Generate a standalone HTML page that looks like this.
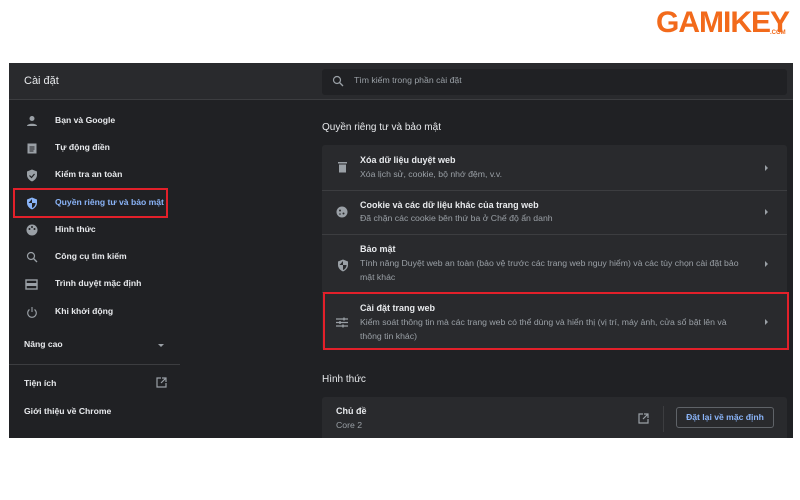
<!DOCTYPE html>
<html><head><meta charset="utf-8"><style>
*{margin:0;padding:0;box-sizing:border-box}
body{width:800px;height:500px;background:#fff;font-family:"Liberation Sans",sans-serif;position:relative;overflow:hidden}
.app{position:absolute;left:9px;top:63px;width:784px;height:375px;background:#202124;overflow:hidden}
.hdr{position:absolute;left:0;top:0;width:784px;height:37px;background:#292a2d;border-bottom:1px solid #3c3d40}
.t{position:absolute;color:#e8eaed;font-size:9.5px;white-space:nowrap}
.b{font-weight:bold}
.sb{font-size:8.6px}
.s{color:#9aa0a6;font-size:8.7px}
.ic{position:absolute}
.card{position:absolute;left:313px;width:465px;background:#292a2d;border-radius:3px}
.sep{position:absolute;left:313px;width:465px;height:1px;background:#3c3d40}
.red{position:absolute;border:2.5px solid #e2202a}
.arr{position:absolute;left:756px;width:0;height:0;border-top:3px solid transparent;border-bottom:3px solid transparent;border-left:3px solid #9aa0a6}
</style></head><body>
<div style="position:absolute;left:656px;top:6px;font:bold 30px 'Liberation Sans',sans-serif;color:#f26a1b;letter-spacing:-1px">GAMIKEY</div>
<div style="position:absolute;left:770px;top:30px;font:bold 6px 'Liberation Sans',sans-serif;color:#f26a1b">.COM</div>
<div class="app">
<div class="hdr"></div>
<div class="t" style="left:15px;top:12px;font-size:11px">Cài đặt</div>
<div style="position:absolute;left:313px;top:6px;width:465px;height:26px;background:#202124;border-radius:3px"></div>
<svg class="ic" style="left:323px;top:12px" width="12" height="12" viewBox="0 0 12 12"><circle cx="5" cy="5" r="3.5" fill="none" stroke="#9aa0a6" stroke-width="1.2"/><path d="M7.5 7.5L11 11" stroke="#9aa0a6" stroke-width="1.3"/></svg>
<div class="t s" style="left:345px;top:12px">Tìm kiếm trong phần cài đặt</div>

<!-- sidebar -->
<svg class="ic" style="left:17px;top:52px" width="12" height="12"><circle cx="6" cy="3.5" r="2.5" fill="#9aa0a6"/><path d="M1 11c0-3 10-3 10 0z" fill="#9aa0a6"/></svg>
<div class="t b sb" style="left:46px;top:52px">Bạn và Google</div>
<svg class="ic" style="left:18px;top:79px" width="10" height="12"><rect x="0.5" y="1.5" width="9" height="10" fill="#9aa0a6"/><path d="M2.5 5h5M2.5 7h5M2.5 9h4" stroke="#202124"/></svg>
<div class="t b sb" style="left:46px;top:79px">Tự động điền</div>
<svg class="ic" style="left:17px;top:106px" width="12" height="13"><path d="M6 0.5L11 2.5V6c0 3-2.5 5.5-5 6.5C3.5 11.5 1 9 1 6V2.5z" fill="#9aa0a6"/><path d="M3.5 6.5l2 2 3-3.5" stroke="#202124" fill="none" stroke-width="1.2"/></svg>
<div class="t b sb" style="left:46px;top:106px">Kiểm tra an toàn</div>
<svg class="ic" style="left:17px;top:134px" width="12" height="13"><path d="M6 0.5L11 2.5V6c0 3-2.5 5.5-5 6.5C3.5 11.5 1 9 1 6V2.5z" fill="#8ab4f8"/><path d="M6 2v4H2.5M6 6h3.5V7c-.5 2-2 3.5-3.5 4z" fill="#202124"/></svg>
<div class="t b sb" style="left:46px;top:134px;color:#8ab4f8">Quyền riêng tư và bảo mật</div>
<div class="red" style="left:4px;top:125px;width:155px;height:30px"></div>
<svg class="ic" style="left:17px;top:161px" width="12" height="12"><circle cx="6" cy="6" r="5.5" fill="#9aa0a6"/><circle cx="3.5" cy="5" r="1" fill="#202124"/><circle cx="6" cy="3" r="1" fill="#202124"/><circle cx="8.5" cy="5" r="1" fill="#202124"/></svg>
<div class="t b sb" style="left:46px;top:161px">Hình thức</div>
<svg class="ic" style="left:17px;top:188px" width="12" height="12"><circle cx="5" cy="5" r="3.5" fill="none" stroke="#9aa0a6" stroke-width="1.2"/><path d="M7.5 7.5L11 11" stroke="#9aa0a6" stroke-width="1.3"/></svg>
<div class="t b sb" style="left:46px;top:188px">Công cụ tìm kiếm</div>
<svg class="ic" style="left:16px;top:216px" width="13" height="11"><rect x="1" y="1" width="11" height="9" fill="none" stroke="#9aa0a6" stroke-width="1.4"/><rect x="1" y="4" width="11" height="3" fill="#9aa0a6"/></svg>
<div class="t b sb" style="left:46px;top:215px">Trình duyệt mặc định</div>
<svg class="ic" style="left:17px;top:243px" width="12" height="12"><path d="M3.5 3.5a4.3 4.3 0 1 0 5 0" fill="none" stroke="#9aa0a6" stroke-width="1.1"/><path d="M6 1v5" stroke="#9aa0a6" stroke-width="1.1"/></svg>
<div class="t b sb" style="left:46px;top:243px">Khi khởi động</div>
<div class="t b sb" style="left:15px;top:276px">Nâng cao</div>
<div style="position:absolute;left:149px;top:281px;border-left:3px solid transparent;border-right:3px solid transparent;border-top:3px solid #9aa0a6"></div>
<div style="position:absolute;left:0;top:301px;width:171px;height:1px;background:#3c3d40"></div>
<div class="t b sb" style="left:15px;top:315px">Tiện ích</div>
<svg class="ic" style="left:147px;top:314px" width="11" height="11"><path d="M5 1H1v9h9V6" fill="none" stroke="#9aa0a6" stroke-width="1.2"/><path d="M6 1h4v4M10 1L5 6" fill="none" stroke="#9aa0a6" stroke-width="1.2"/></svg>
<div class="t b sb" style="left:15px;top:343px">Giới thiệu về Chrome</div>

<!-- main -->
<div class="t" style="left:313px;top:59px;font-size:10px">Quyền riêng tư và bảo mật</div>
<div class="card" style="top:82px;height:205px"></div>
<div class="sep" style="top:127px"></div>
<div class="sep" style="top:171px"></div>
<div class="sep" style="top:229px"></div>
<svg class="ic" style="left:329px;top:99px" width="9" height="11"><rect x="0" y="0" width="9" height="1.5" fill="#9aa0a6"/><rect x="1" y="2.5" width="7" height="8" fill="#9aa0a6"/></svg>
<div class="t b" style="left:351px;top:92px;font-size:9px">Xóa dữ liệu duyệt web</div>
<div class="t s" style="left:351px;top:106px">Xóa lịch sử, cookie, bộ nhớ đệm, v.v.</div>
<div class="arr" style="top:102px"></div>
<svg class="ic" style="left:327px;top:143px" width="12" height="12"><circle cx="6" cy="6" r="5.5" fill="#9aa0a6"/><circle cx="4" cy="4.5" r="1" fill="#292a2d"/><circle cx="7.5" cy="7.5" r="1" fill="#292a2d"/><circle cx="4" cy="8" r=".8" fill="#292a2d"/></svg>
<div class="t b" style="left:351px;top:137px;font-size:9px">Cookie và các dữ liệu khác của trang web</div>
<div class="t s" style="left:351px;top:150px">Đã chặn các cookie bên thứ ba ở Chế độ ẩn danh</div>
<div class="arr" style="top:146px"></div>
<svg class="ic" style="left:328px;top:196px" width="12" height="13"><path d="M6 0.5L11 2.5V6c0 3-2.5 5.5-5 6.5C3.5 11.5 1 9 1 6V2.5z" fill="#9aa0a6"/><path d="M6 2v4H2.5M6 6h3.5V7c-.5 2-2 3.5-3.5 4z" fill="#292a2d"/></svg>
<div class="t b" style="left:351px;top:181px;font-size:9px">Bảo mật</div>
<div class="t s" style="left:351px;top:195px">Tính năng Duyệt web an toàn (bảo vệ trước các trang web nguy hiểm) và các tùy chọn cài đặt bảo</div>
<div class="t s" style="left:351px;top:209px">mật khác</div>
<div class="arr" style="top:198px"></div>
<svg class="ic" style="left:327px;top:254px" width="12" height="11"><path d="M0 2h12M0 5.5h12M0 9h12" stroke="#9aa0a6" stroke-width="1.2"/><path d="M8 0.5v3M4 4v3M7 7.5v3" stroke="#9aa0a6" stroke-width="1.4"/></svg>
<div class="t b" style="left:351px;top:240px;font-size:9px">Cài đặt trang web</div>
<div class="t s" style="left:351px;top:254px">Kiểm soát thông tin mà các trang web có thể dùng và hiển thị (vị trí, máy ảnh, cửa sổ bật lên và</div>
<div class="t s" style="left:351px;top:268px">thông tin khác)</div>
<div class="arr" style="top:256px"></div>
<div class="red" style="left:314px;top:229px;width:466px;height:58px"></div>
<div class="t" style="left:313px;top:311px;font-size:10px">Hình thức</div>
<div class="card" style="top:334px;height:50px"></div>
<div class="t b" style="left:327px;top:343px;font-size:9px">Chủ đề</div>
<div class="t s" style="left:327px;top:357px">Core 2</div>
<svg class="ic" style="left:629px;top:350px" width="11" height="11"><path d="M5 1H1v9h9V6" fill="none" stroke="#9aa0a6" stroke-width="1.2"/><path d="M6 1h4v4M10 1L5 6" fill="none" stroke="#9aa0a6" stroke-width="1.2"/></svg>
<div style="position:absolute;left:654px;top:343px;width:1px;height:26px;background:#3c3d40"></div>
<div style="position:absolute;left:667px;top:344px;width:98px;height:21px;border:1px solid #5f6368;border-radius:3px;color:#8ab4f8;font-size:8.6px;font-weight:bold;text-align:center;line-height:19px">Đặt lại về mặc định</div>
</div>
</body></html>
